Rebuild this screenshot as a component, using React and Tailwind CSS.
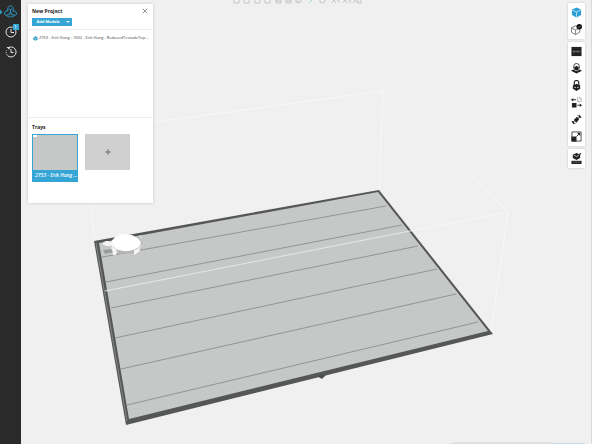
import { Plus, X } from 'lucide-react'

const plateLines = [
  [102, 257, 386, 206],
  [106, 282, 402, 225],
  [111, 308, 418, 246],
  [115, 338, 437, 269],
  [121, 369, 456, 294],
  [127, 405, 478, 322],
]

function LogoIcon() {
  return (
    <svg viewBox="0 0 24 24" className="size-[13px]" fill="none" stroke="#2b9ccd" strokeWidth="1.8">
      <path d="M7 12V7c0-7 10-7 10 0v5" />
      <path d="M9 7l3 2 3-2M12 9v4l-3 3M12 13l3 3" />
      <path d="M7 10c-4 1-7 4-6 7s7 2 11-1" />
      <path d="M17 10c4 1 7 4 6 7s-7 2-11-1" />
      <path d="M5 19c2 4 5 4 7 1 2 3 5 3 7-1" />
    </svg>
  )
}

function ClockIcon() {
  return (
    <svg viewBox="0 0 24 24" className="size-3" fill="none" stroke="#e8e8e8" strokeWidth="2">
      <circle cx="12" cy="12" r="10" />
      <path d="M12 6v7h6" />
    </svg>
  )
}

function HistoryIcon() {
  return (
    <svg viewBox="0 0 24 24" className="size-3" fill="none" stroke="#e8e8e8" strokeWidth="2">
      <path d="M6 4a10 10 0 1 1-1 15" />
      <path d="M4 18a10 10 0 0 1-1-9" strokeDasharray="2 2" />
      <path d="M12 6v7h5" />
      <path d="M3 2h6v6z" fill="#e8e8e8" stroke="none" />
    </svg>
  )
}

function Cube({ x = 0, y = 0, s = 1, fill = '#222', line = '#fff' }) {
  return (
    <g transform={`translate(${x} ${y}) scale(${s})`}>
      <path d="M12 1l10 4.500v12L12 23 2 17.500v-12z" fill={fill} />
      <path d="M2 6l10 5 10-5M12 11v12" fill="none" stroke={line} strokeWidth="1.800" />
    </g>
  )
}

const drawings = {
  solid: <Cube fill="#2d9fd4" line="#c4e7f5" />,
  check: (
    <>
      <path d="M10 4l9 4v10l-9 5-9-5V8zM1 8l9 5 9-5M10 13v10" fill="none" stroke="#555" strokeWidth="1.600" />
      <circle cx="18" cy="6" r="6" fill="#111" />
      <path d="M15.500 6l2 2 3-4" fill="none" stroke="#ccc" strokeWidth="1" />
    </>
  ),
  units: (
    <>
      <path d="M1 2h22v20H1z" fill="#222" />
      <path d="M4 12h16" stroke="#888" strokeWidth="3" strokeDasharray="2 1" />
    </>
  ),
  layflat: (
    <>
      <path d="M6 12V7a6 6 0 0 1 12 0v5" fill="none" stroke="#333" strokeWidth="2" />
      <path d="M12 6l5 3v5l-5 3-5-3V9z" fill="#222" />
      <path d="M0 17l5-3 7 4 7-4 5 3-12 6z" fill="#222" />
    </>
  ),
  lock: (
    <>
      <path d="M7 12V6a5 5 0 0 1 10 0v6" fill="none" stroke="#222" strokeWidth="2.500" />
      <path d="M12 8l8 4v7l-8 5-8-5v-7z" fill="#222" />
      <circle cx="9" cy="16" r="1.500" fill="#fff" />
      <circle cx="15" cy="16" r="1.500" fill="#fff" />
    </>
  ),
  move: (
    <>
      <path d="M2 13h10v10H2z" fill="#222" />
      <path d="M14 2h8v8h-8z" fill="none" stroke="#444" strokeWidth="1.500" strokeDasharray="2 1.500" />
      <path d="M11 6H5M14 18h5" stroke="#222" strokeWidth="2" />
      <path d="M0 6l5-4v8zM24 18l-5-4v8z" fill="#222" />
    </>
  ),
  rotate: (
    <>
      <path d="M13 6l5 5-6 8-6-6z" fill="#222" />
      <path d="M14 3c4 0 7 2 7 6M10 21c-4 0-7-2-7-6" fill="none" stroke="#333" strokeWidth="1.500" strokeDasharray="4 2" />
      <path d="M18 1l5 7h-7zM6 23l-5-7h7z" fill="#222" />
    </>
  ),
  scale: (
    <>
      <path d="M2 2h20v20H2z" fill="none" stroke="#333" strokeWidth="1.800" />
      <path d="M1 12h11v11H1z" fill="#222" />
      <path d="M12 12l6-6" stroke="#222" strokeWidth="2" />
      <path d="M13 4h7v7z" fill="#222" />
    </>
  ),
  print: (
    <>
      <path d="M12 0l8 4v7l-8 4-8-4V4z" fill="#222" />
      <path d="M7 5l5 3 5-3" stroke="#fff" strokeWidth="1.500" fill="none" />
      <path d="M17 4l5-3" stroke="#222" strokeWidth="2.500" />
      <path d="M1 17h22v7H1z" fill="#222" />
      <path d="M5 20h14" stroke="#999" strokeWidth="1.500" strokeDasharray="2 1" />
    </>
  ),
}

const toolGroups = [
  [['solid', 'Solid view'], ['check', 'Validate model']],
  [
    ['units', 'Units'],
    ['layflat', 'Lay flat'],
    ['lock', 'Lock'],
    ['move', 'Move'],
    ['rotate', 'Rotate'],
    ['scale', 'Scale'],
  ],
  [['print', 'Print']],
]

function Scene() {
  return (
    <svg viewBox="21 0 570 444" preserveAspectRatio="xMinYMax slice" className="absolute inset-0 h-full w-full">
      <path d="M90 200L95 241M90 131L383 91L508 212L491 332M383 91L379 191" fill="none" stroke="#f8f8f8" />
      <path d="M94 241L379 190L493 334L126 425z" fill="#555756" />
      <path d="M99 243L378 192L488 331L129 419z" fill="#c6c8c7" />
      <path d="M96 243L127 421" stroke="#929493" strokeWidth="0.8" />
      {plateLines.map(([x1, y1, x2, y2]) => (
        <line key={y1} x1={x1} y1={y1} x2={x2} y2={y2} stroke="#858786" strokeWidth="0.8" />
      ))}
      <path d="M105 291L410 231" stroke="#e6e8e7" />
      <path d="M410 231L508 212" stroke="#f8f8f8" />
      <path d="M317 376l5 3 4-4z" fill="#4c4e4d" />
      {/* turtle model */}
      <path d="M103 250l8-1 4 3-10 2z" fill="#9b9d9c" />
      <path d="M116 250h22l-2 3-16 1z" fill="#b4b6b5" />
      <path d="M110 247l4-4 5 8-6 1zM134 250l6-6 1 4-3 4z" fill="#d9dbda" />
      <path d="M111 242c3-5 8-8 14-8 8 0 14 4 16 9 1 5-4 7-12 8-9 1-15-2-18-9z" fill="#fff" />
      <path d="M113 243l-5-2c-4 0-6 2-5 4 2 2 6 2 10 2z" fill="#f4f4f4" />
      <path d="M112 247l1 8h3l1-5zM134 250l5-2 1 3-6 4z" fill="#f6f6f6" />
      <path d="M138 236l4-1-1 4z" fill="#d4d6d5" />
      <path d="M103 245c3 2 6 2 9 1M138 237l4 5-3 6M116 250c7 3 16 2 22-2" stroke="#b1b3b2" strokeWidth="0.8" fill="none" />
      <path d="M449 444q3-2 8-2h95v2z" fill="#dedede" />
      <path d="M552 443.500h33" stroke="#c1dde5" />
    </svg>
  )
}

function TopTools() {
  return (
    <svg viewBox="0 0 134 4" className="h-1 w-[134px]" fill="none" stroke="#b9bbbb" strokeWidth="0.8">
      <path d="M4 0v3h5V0M14 0v3h5V0M25 0v3h5V0M35 0v3h5V0M46 0v3h5V0M46 1h5M56 0v3h5V0M56 1h5M66 0v2l3 1 2-1V0M68 0v3M90 0v2l2 1 3-1V0" />
      <path d="M79 3l3-3" stroke="#88cfe0" />
      <path d="M102 3l2-3 2 3M107 0l3 2M113 3l2-3 2 3M118 0h2v3M123 3l2-3 2 3M128 0v3h3V0" />
    </svg>
  )
}

function Sidebar() {
  return (
    <nav className="flex w-[21px] shrink-0 flex-col items-center gap-2 bg-[#2a2a2a] pt-[5px]">
      <button aria-label="Models" className="flex w-full items-center">
        <span className="h-1 w-[2px] rounded-r-full bg-[#2f9dcb]" />
        <span className="pl-[2px]"><LogoIcon /></span>
      </button>
      <button aria-label="Jobs, 1 active" className="relative">
        <ClockIcon />
        <span className="absolute -top-[2px] -right-[2px] size-[6px] bg-[#35a5d6] text-center text-[5px] leading-[6px] text-white">1</span>
      </button>
      <button aria-label="History"><HistoryIcon /></button>
    </nav>
  )
}

function ProjectPanel() {
  return (
    <aside className="relative mt-1 ml-[7px] flex w-[125px] shrink-0 flex-col bg-white text-[#333] shadow-[0_0_3px_rgba(0,0,0,0.18)]">
      <header className="border-b border-[#ededed] px-1 pt-[3px] pb-[3px]">
        <div className="flex items-start justify-between">
          <h1 className="text-[5px] leading-[8px] font-bold text-[#222]">New Project</h1>
          <button aria-label="Close" className="text-[#555]"><X size={8} strokeWidth={2} /></button>
        </div>
        <div className="mt-[3px] flex h-2 w-10 bg-[#35a5d6] text-white">
          <button className="flex-1 text-center text-[4px] leading-[8px] font-bold">Add Models</button>
          <button aria-label="More ways to add" className="flex w-2 items-center justify-center">
            <svg viewBox="0 0 4 2" className="h-[2px] w-1"><path d="M0 0h4L2 2z" fill="#fff" /></svg>
          </button>
        </div>
      </header>
      <ul className="min-h-[87px] px-[5px] pt-1">
        <li className="flex items-center gap-px text-[4px] leading-[8px] whitespace-nowrap text-[#444]">
          <svg viewBox="0 0 24 24" className="size-[5px] shrink-0"><Cube fill="#2d9fc0" /></svg>
          2753 - Erik Hung - 1602 - Erik Hung - ReducedTestudoTop...
        </li>
      </ul>
      <section className="border-t border-[#ededed] px-1 pt-[5px] pb-[21px]">
        <h2 className="text-[5px] leading-[8px] font-bold text-[#222]">Trays</h2>
        <div className="mt-[3px] flex items-start gap-[7px]">
          <button className="w-[46px] border border-[#35a5d6] bg-[#35a5d6] text-left text-white">
            <span className="block h-[35px] bg-[#c6c8c7]">
              <span className="block h-[2px] w-1 bg-white" />
            </span>
            <span className="block pl-[2px] text-[5px] leading-[11px] font-semibold whitespace-nowrap italic">2753 - Erik Hung ...</span>
          </button>
          <button aria-label="Add tray" className="flex h-9 w-[45px] items-center justify-center bg-[#d0d0d0] text-[#666]">
            <Plus size={8} strokeWidth={3} />
          </button>
        </div>
      </section>
    </aside>
  )
}

function ToolRail() {
  return (
    <div className="relative flex flex-col gap-[3px] pt-[3px] pr-[6px]">
      {toolGroups.map((group) => (
        <div key={group[0][0]} className="flex w-[17px] flex-col bg-white py-px shadow-[0_0_2px_rgba(0,0,0,0.2)]">
          {group.map(([name, label]) => (
            <button key={name} aria-label={label} title={label} className="flex h-[17px] items-center justify-center">
              <svg viewBox="0 0 24 24" className="size-[11px]">{drawings[name]}</svg>
            </button>
          ))}
        </div>
      ))}
    </div>
  )
}

export default function App() {
  return (
    <div className="flex min-h-screen bg-[#f0f0f0] font-['Open_Sans','Noto_Sans',sans-serif]">
      <Sidebar />
      <main className="relative flex flex-1 items-start justify-between border-r border-[#dadada]">
        <Scene />
        <ProjectPanel />
        <div className="relative flex flex-1 pl-[77px]"><TopTools /></div>
        <ToolRail />
      </main>
    </div>
  )
}
